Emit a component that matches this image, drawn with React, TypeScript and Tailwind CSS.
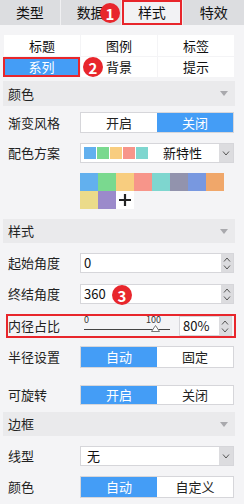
import { ReactNode } from "react";

const font = { fontFamily: '"Noto Sans CJK SC", "Noto Sans", sans-serif' };

function Badge({ n, className }: { n: number; className: string }) {
  return (
    <div
      className={`absolute w-[20px] h-[20px] rounded-full bg-[#e8262c] text-white text-[15px] font-bold flex items-center justify-center leading-none ${className}`}
    >
      {n}
    </div>
  );
}

function Header({ title, className = "" }: { title: string; className?: string }) {
  return (
    <div className={`ml-[3px] w-[232px] h-[24px] bg-[#eaeaec] flex items-center justify-between pl-[5px] pr-[7px] text-[13px] text-[#222] ${className}`}>
      <span>{title}</span>
      <svg width="8" height="5" viewBox="0 0 8 5">
        <path d="M0 0 L8 0 L4 5 Z" fill="#a9a9ad" />
      </svg>
    </div>
  );
}

function Row({ label, className = "", children }: { label: string; className?: string; children: ReactNode }) {
  return (
    <div className={`flex items-center ${className}`}>
      <div className="w-[80px] pl-[8px] text-[13px] text-[#222]">{label}</div>
      {children}
    </div>
  );
}

function Toggle({ left, right, active, h = "h-[21px]" }: { left: string; right: string; active: 0 | 1; h?: string }) {
  const on = "bg-[#449df6] text-white";
  const off = "bg-white text-[#222]";
  return (
    <div className={`w-[154px] ${h} border border-[#d6d6da] flex text-[13px]`}>
      <div className={`flex-1 flex items-center justify-center ${active === 0 ? on : off}`}>{left}</div>
      <div className={`flex-1 flex items-center justify-center ${active === 1 ? on : off}`}>{right}</div>
    </div>
  );
}

function Chevron({ up = false }: { up?: boolean }) {
  return (
    <svg width="8" height="5" viewBox="0 0 8 5">
      <path d={up ? "M1 4.5 L4 1 L7 4.5" : "M1 0.5 L4 4 L7 0.5"} fill="none" stroke="#555" strokeWidth="1" />
    </svg>
  );
}

function Spinner() {
  return (
    <div className="w-[12px] h-full bg-[#dcdcdf] flex flex-col items-center justify-center gap-[3px]">
      <Chevron up />
      <Chevron />
    </div>
  );
}

function NumberInput({ value, w = "w-[154px]" }: { value: string; w?: string }) {
  return (
    <div className={`${w} h-[20px] border border-[#d6d6da] bg-white flex`}>
      <div className="flex-1 pl-[3px] text-[13px] text-[#111] flex items-center">{value}</div>
      <Spinner />
    </div>
  );
}

function Select({ children }: { children: ReactNode }) {
  return (
    <div className="w-[154px] h-[20px] border border-[#d6d6da] bg-white flex">
      <div className="flex-1 flex items-center">{children}</div>
      <div className="w-[14px] bg-[#dcdcdf] flex items-center justify-center">
        <Chevron />
      </div>
    </div>
  );
}

const palette = ["#62b0ee", "#7ad98f", "#f8cd7f", "#f7958a", "#7ed6cf", "#9293ad", "#7898e0", "#f0a76a", "#ebdb8a", "#9b8acb"];

export default function App() {
  return (
    <div className="relative w-[244px] h-[504px] bg-[#f4f4f6] overflow-hidden" style={font}>
      {/* main tabs */}
      <div className="flex h-[25px] gap-px bg-[#f0f0f2] text-[14px] text-[#111]">
        <div className="w-[60px] bg-[#dcdde0] flex items-center justify-center">类型</div>
        <div className="w-[60px] bg-[#dcdde0] flex items-center justify-center">数据</div>
        <div className="w-[61px] bg-[#f2f2f4] border-2 border-[#e8262c] flex items-center justify-center">样式</div>
        <div className="w-[61px] bg-[#dcdde0] flex items-center justify-center">特效</div>
      </div>

      {/* sub tabs */}
      <div className="mt-[10px] ml-[4px] w-[230px] grid grid-cols-3 gap-px text-[13px] text-[#111]">
        <div className="h-[21px] bg-white flex items-center justify-center">标题</div>
        <div className="h-[21px] bg-white flex items-center justify-center">图例</div>
        <div className="h-[21px] bg-white flex items-center justify-center">标签</div>
        <div className="h-[20px] -ml-px bg-[#449df6] text-white border-2 border-[#e8262c] flex items-center justify-center">系列</div>
        <div className="h-[20px] bg-white flex items-center justify-center">背景</div>
        <div className="h-[20px] bg-white flex items-center justify-center">提示</div>
      </div>

      <Header title="颜色" className="mt-[4px] h-[25px]" />

      <Row label="渐变风格" className="mt-[6px]">
        <Toggle left="开启" right="关闭" active={1} />
      </Row>

      <Row label="配色方案" className="mt-[10px]">
        <Select>
          <div className="flex gap-px pl-[3px]">
            {palette.slice(0, 5).map((c) => (
              <div key={c} className="w-[12px] h-[12px]" style={{ background: c }} />
            ))}
          </div>
          <div className="flex-1 text-center text-[13px] text-[#111] pr-[2px]">新特性</div>
        </Select>
      </Row>

      <div className="mt-[10px] ml-[80px] w-[144px] grid grid-cols-8">
        {palette.map((c) => (
          <div key={c} className="h-[18px]" style={{ background: c }} />
        ))}
        <div className="h-[18px] bg-white flex items-center justify-center">
          <svg width="12" height="12" viewBox="0 0 12 12">
            <path d="M6 0 V12 M0 6 H12" stroke="#222" strokeWidth="2.2" />
          </svg>
        </div>
      </div>

      <Header title="样式" className="mt-[10px]" />

      <Row label="起始角度" className="mt-[10px]">
        <NumberInput value="0" />
      </Row>

      <Row label="终结角度" className="mt-[11px]">
        <NumberInput value="360" />
      </Row>

      <div className="mt-[10px] ml-[6px] w-[230px] h-[24px] border-2 border-[#e8262c] flex items-center">
        <div className="w-[74px] pl-[0px] text-[13px] text-[#222]">内径占比</div>
        <div className="relative w-[92px] h-[20px]">
          <span className="absolute left-[2px] top-[-3px] text-[9px] text-[#333]">0</span>
          <span className="absolute left-[64px] top-[-3px] text-[9px] text-[#333]">100</span>
          <div className="absolute left-[2px] right-[4px] top-[13px] h-px bg-[#444]" />
          <svg className="absolute left-[69px] top-[9px]" width="9" height="7" viewBox="0 0 9 7">
            <path d="M4.5 0.5 L8.5 6.5 L0.5 6.5 Z" fill="white" stroke="#777" strokeWidth="1" />
          </svg>
        </div>
        <div className="ml-[5px]">
          <NumberInput value="80%" w="w-[53px]" />
        </div>
      </div>

      <Row label="半径设置" className="mt-[8px]">
        <Toggle left="自动" right="固定" active={0} h="h-[22px]" />
      </Row>

      <Row label="可旋转" className="mt-[17px]">
        <Toggle left="开启" right="关闭" active={0} h="h-[20px]" />
      </Row>

      <Header title="边框" className="mt-[7px]" />

      <Row label="线型" className="mt-[10px]">
        <Select>
          <span className="pl-[6px] text-[13px] text-[#111]">无</span>
        </Select>
      </Row>

      <Row label="颜色" className="mt-[10px]">
        <Toggle left="自动" right="自定义" active={0} h="h-[22px]" />
      </Row>

      <Badge n={1} className="left-[100px] top-[3px]" />
      <Badge n={2} className="left-[83px] top-[57px]" />
      <Badge n={3} className="left-[112px] top-[285px]" />
    </div>
  );
}
